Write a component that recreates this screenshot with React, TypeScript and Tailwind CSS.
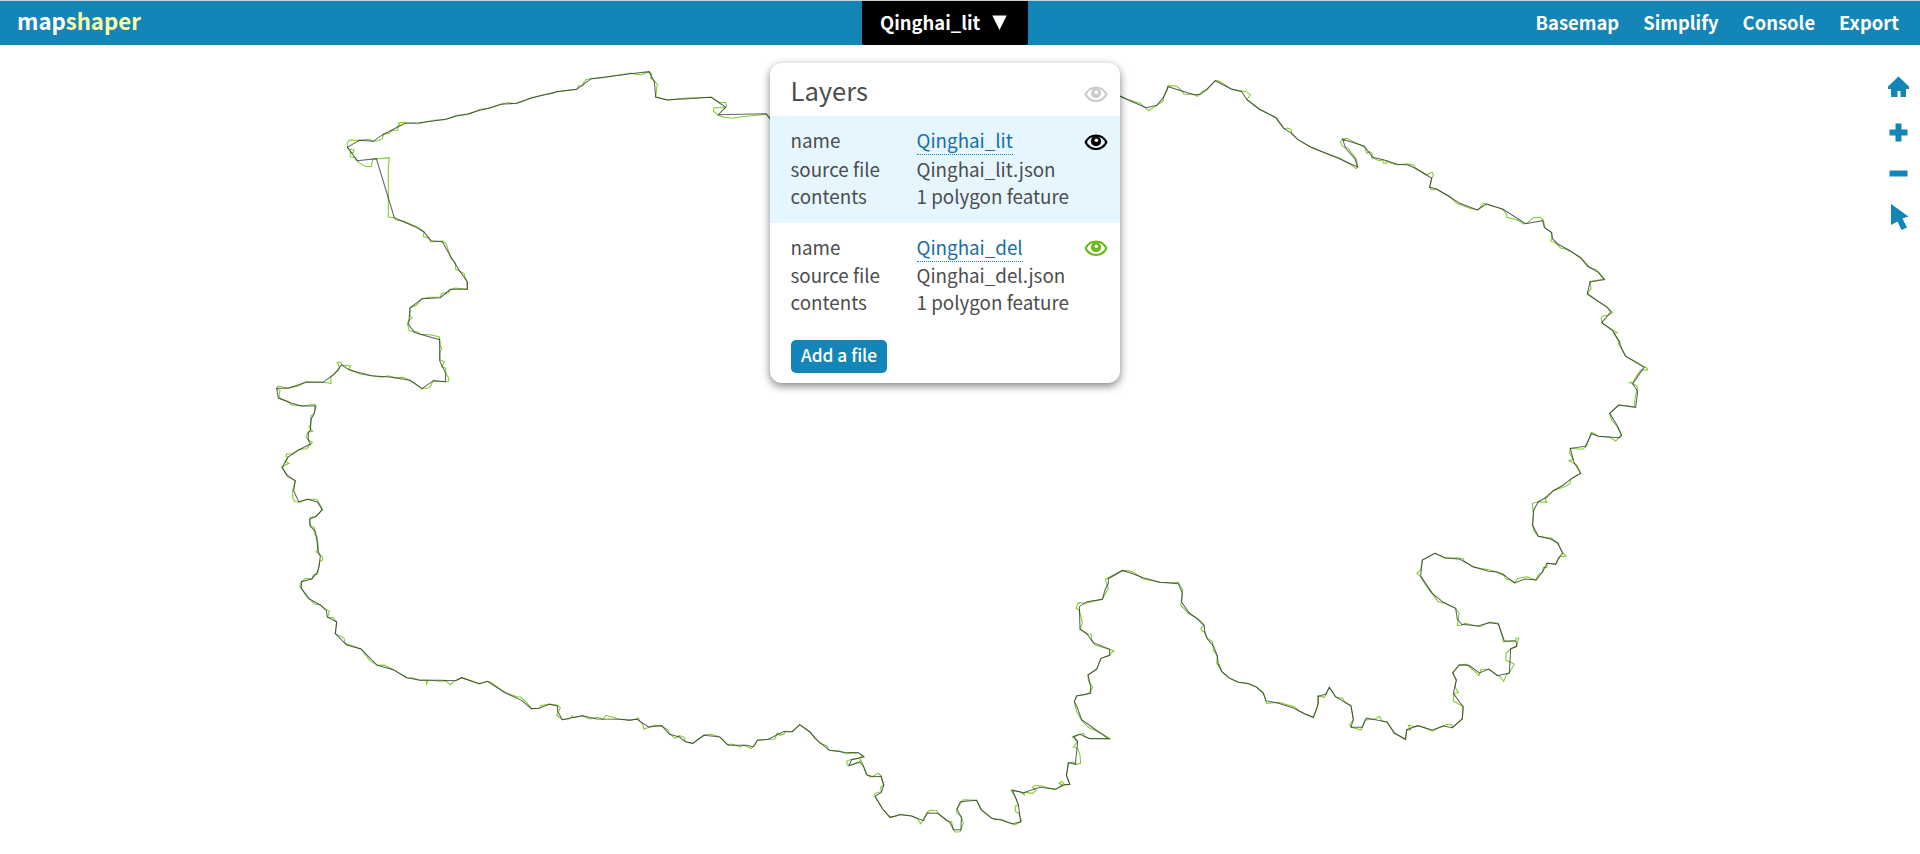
type Trace = { x: number; y: number; pts: string };

// Each trace is a run of vertices in thirds of a pixel, relative to its own origin.
const simplified: Trace[] = [
  { x: 260, y: 60, pts: "2550,95 1545,195 1518,161 1375,164 1397,142 1354,112 1222,120 1187,111 1183,66 1167,35 1112,41 1060,48 994,56 965,77 949,88 890,95 812,115 768,130 724,133 680,146 660,151 625,161 590,168 560,177 520,183 478,188 437,189 400,208 368,224 340,244 298,241 262,262 292,302 349,296 403,473 430,485 465,500 492,516 513,542 547,545 570,586 597,630 622,665 622,688 571,688 541,713 486,716 450,744 446,794 463,817 480,823 539,839 539,902 557,940 556,965 520,962 486,986 450,961 395,952 335,947 270,931 245,915 222,943 189,967 138,967 84,985 50,985" },
  { x: 260, y: 370, pts: "50,55 55,84 93,99 125,108 168,108 163,130 154,146 151,180 145,188 145,210 151,222 118,239 84,261 66,293 82,316 106,332 101,362 116,395 142,388 172,396 187,419 168,439 149,448 151,469 166,484 172,520 173,540 181,559 177,590 171,608 155,627 125,635 124,655 147,686 180,704 199,722 202,741 230,756 226,791 260,825 303,837 352,886 400,899 440,923 480,931 540,931 587,932 605,923 658,941 682,934 735,968 785,991 814,1016 838,1015 868,1003 892,1008 893,1024 907,1049 935,1043 968,1037 1010,1047 1080,1048 1110,1051" },
  { x: 640, y: 650, pts: "-30,210 -8,208 0,214 26,231 65,227 88,252 118,261 136,275 158,280 192,256 240,261 265,286 320,286 340,290 352,271 385,268 430,245 457,245 479,224 510,246 525,265 568,301 612,307 655,308 672,321 635,329 627,347 660,336 671,350 681,375 700,380 723,379 731,406 724,427 705,439 728,477 750,502 780,494 815,498 850,512 862,489 893,490 930,518 941,539 963,539 964,502 951,478 961,455 1010,451 1025,481 1055,505 1085,511 1118,521 1142,516 1135,463 1117,420 1150,428 1200,412 1246,418 1268,405 1289,403 1279,376 1286,338 1306,343 1313,275 1301,260 1320,253 1348,266 1405,266 1360,234 1325,209 1310,168 1303,155 1310,138 1352,130 1352,110 1344,75 1370,57 1383,25 1409,16" },
  { x: 1050, y: 540, pts: "179,346 179,328 130,308 112,283 90,267 88,200 111,185 157,178 165,150 175,130 175,116 217,92 240,98 280,113 330,127 385,131 397,160 395,187 418,219 440,235 463,258 464,278 472,297 490,317 502,348 505,375 515,394 535,413 565,427 595,431 620,442 640,460 648,482 685,490 730,504 765,522 790,532 805,490 805,469 828,462 838,442 857,470 903,498 910,538 903,562 937,562 949,534 1011,546 1033,580 1067,598 1070,569 1103,557 1147,570 1180,558 1207,563 1237,537 1239,500 1210,460 1219,420 1208,399 1228,375 1257,376 1288,399 1317,387 1342,407 1378,399 1382,326 1400,319 1398,303 1363,303 1345,252 1318,248 1283,258 1235,253 1222,238 1217,205 1180,187 1147,160 1112,108 1117,60 1155,40" },
  { x: 1390, y: 180, pts: "135,1120 165,1133 210,1138 250,1160 295,1174 320,1176 345,1187 374,1209 405,1197 438,1200 457,1177 471,1150 497,1153 506,1133 518,1120 503,1089 482,1077 445,1069 428,1036 431,990 445,965 470,952 490,932 520,915 545,895 572,880 551,845 541,805 586,799 605,761 625,769 688,773 695,766 682,737 659,700 686,675 737,682 743,634 728,611 762,562 706,528 696,507 688,487 668,452 635,428 662,397 652,382 592,341 600,306 643,299 625,277 592,258 572,234 540,212 505,193 488,177 485,158 463,142 458,122 407,131 338,87 289,72 262,90 210,70 170,45 140,27 119,22 125,-5 110,-15 80,-33 55,-45" },
  { x: 1110, y: 60, pts: "895,315 862,313 820,299 788,292 762,258 698,238 707,265 735,297 743,321 690,297 640,277 600,260 563,238 545,220 521,205 497,173 447,147 411,119 395,95 362,86 316,62 290,88 272,103 252,104 174,80 160,113 140,136 108,143 70,127 30,108 0,95" },
];

const detailed: Trace[] = [
  { x: 260, y: 60, pts: "2550,95 1545,190 1520,163 1440,171 1417,175 1393,172 1375,166 1360,153 1362,143 1395,143 1400,138 1397,127 1380,128 1354,112 1270,115 1222,120 1187,111 1192,73 1180,58 1172,55 1175,42 1167,35 1145,44 1127,43 1112,39 1060,48 1030,53 980,58 970,69 968,77 955,78 952,88 890,95 880,100 850,104 812,114 790,124 768,131 745,128 724,132 690,145 660,148 640,157 622,164 590,166 555,179 520,181 475,191 437,189 425,187 415,190 420,195 413,197 413,210 395,212 388,220 370,223 367,235 355,242 340,244 325,238 298,241 268,240 262,247 262,262 268,268 282,270 280,278 271,276 271,290 285,294 292,304 315,319 334,320 338,298 388,293 385,320 385,471 403,473 408,480 430,483 475,502 492,516 490,530 506,533 513,546 547,543 558,550 563,565 572,594 587,610 587,628 612,640 616,655 621,665 622,688 585,684 571,690 565,698 545,700 541,711 510,712 486,716 470,735 450,743 450,768 456,774 447,780 442,790 448,812 475,817 480,823 515,825 538,831 541,860 545,864 540,880 540,900 553,905 545,920 558,925 557,940 567,955 565,964 556,965 520,962 508,983 486,986 465,970 430,952 405,953 385,947 365,952 300,942 267,927 272,918 245,915 243,907 232,907 238,920 237,930 212,950 213,970 189,967 138,965 115,978 84,985 55,978 50,985" },
  { x: 260, y: 370, pts: "50,55 60,62 57,75 60,85 85,95 93,104 125,108 165,103 163,130 153,137 151,165 147,170 158,184 145,186 138,200 145,210 157,217 140,236 118,238 95,252 80,252 78,260 84,261 75,275 87,280 66,290 82,320 106,332 98,362 98,385 105,395 120,397 142,388 170,388 178,400 187,419 168,440 150,442 149,465 163,473 162,490 171,500 176,540 168,545 188,560 188,570 179,575 173,612 160,615 155,628 137,625 124,635 119,650 124,655 140,680 165,702 180,704 198,718 208,724 203,742 220,743 230,756 226,791 252,804 255,820 303,837 330,872 352,886 372,885 400,899 440,923 460,924 480,931 498,930 500,941 504,930 540,934 555,932 572,944 580,934 605,923 658,942 682,934 692,937 735,967 770,980 782,981 800,997 814,1016 838,1014 842,1007 868,1002 893,1006 901,1014 890,1035 907,1049 930,1046 938,1037 940,1043 968,1037 990,1047 1012,1042 1030,1048 1038,1036 1075,1047 1115,1051" },
  { x: 640, y: 650, pts: "-25,211 -5,204 0,214 8,222 12,238 26,232 45,226 65,228 85,240 88,252 106,265 118,257 133,262 136,275 158,280 192,255 212,253 238,260 262,284 275,282 300,291 310,285 333,295 345,285 352,271 385,268 405,267 412,248 420,256 432,252 435,243 457,245 479,224 510,246 540,280 560,287 568,301 600,303 617,311 655,308 670,318 655,325 635,328 620,333 622,345 635,344 658,335 662,328 668,342 678,372 690,381 700,378 715,370 723,377 732,405 722,412 724,425 705,430 705,439 728,477 750,502 768,499 780,492 815,498 832,506 842,521 862,486 870,481 890,482 895,490 920,512 935,516 940,540 946,546 960,545 970,520 964,500 951,490 949,478 970,449 1010,451 1020,475 1060,508 1085,508 1100,516 1125,525 1145,512 1135,488 1126,485 1126,468 1135,466 1128,445 1113,422 1140,425 1153,435 1152,427 1178,430 1188,421 1177,412 1185,407 1203,407 1230,415 1246,418 1270,407 1257,400 1265,394 1275,405 1290,403 1280,376 1284,338 1300,336 1308,343 1322,340 1320,315 1313,295 1300,291 1313,275 1297,260 1310,256 1330,250 1335,260 1348,265 1412,267 1380,248 1345,232 1325,212 1310,185 1303,155 1310,137 1335,134 1348,128 1358,112 1345,92 1344,75 1370,59 1383,25 1409,16" },
  { x: 1050, y: 540, pts: "179,346 182,340 192,333 178,328 135,315 125,300 124,283 112,281 90,267 97,248 88,210 78,205 85,188 105,190 157,178 175,145 166,118 217,91 237,92 250,97 280,117 330,127 365,128 385,127 398,150 392,195 415,220 445,237 463,255 453,265 457,274 465,276 472,295 487,305 490,330 502,348 500,372 508,373 515,394 545,418 565,427 595,430 620,441 640,458 650,490 685,487 735,501 745,512 790,533 803,500 803,467 823,472 838,442 857,472 878,475 885,487 903,496 910,540 898,555 905,562 933,570 945,540 975,537 989,529 995,543 1011,546 1033,578 1065,598 1070,570 1082,570 1075,555 1095,560 1110,558 1147,573 1190,553 1205,555 1207,563 1237,535 1241,500 1210,483 1212,460 1225,458 1215,440 1219,420 1208,397 1228,374 1250,373 1287,407 1293,388 1315,388 1350,410 1361,424 1369,405 1378,398 1393,373 1367,360 1369,340 1380,328 1400,319 1406,295 1399,295 1396,302 1360,306 1357,290 1345,250 1318,246 1290,260 1245,250 1233,256 1222,257 1227,220 1217,205 1185,190 1165,185 1130,140 1112,110 1101,100 1112,90 1117,60 1155,39" },
  { x: 1390, y: 180, pts: "135,1119 165,1135 205,1133 220,1136 222,1143 250,1162 297,1169 320,1176 340,1182 348,1197 360,1200 374,1209 382,1196 410,1190 438,1200 445,1184 457,1177 460,1162 471,1163 471,1150 497,1152 510,1130 528,1128 518,1118 503,1089 485,1075 445,1069 433,1055 427,1036 430,1000 427,970 445,965 470,967 465,952 490,932 528,918 540,910 543,897 572,880 560,855 537,842 550,838 539,820 541,805 578,808 590,798 603,758 612,760 625,769 660,772 677,783 690,770 694,764 680,738 665,720 659,700 686,675 733,680 735,655 743,620 730,612 719,608 730,605 738,590 752,570 773,570 770,564 758,558 738,545 708,530 685,490 690,485 672,460 682,458 668,450 638,430 633,415 637,409 655,405 668,398 652,382 620,362 592,343 603,325 600,304 643,297 620,270 600,263 572,232 530,208 512,204 495,187 483,185 485,158 465,143 460,120 450,112 430,113 413,128 400,132 385,121 350,112 350,103 338,88 289,72 280,70 265,90 240,85 200,70 180,50 140,28 125,30 119,22 125,-5 130,-13 128,-22 120,-22 110,-15 80,-33 70,-45 50,-49" },
  { x: 1110, y: 60, pts: "890,311 862,315 845,310 830,302 828,310 820,309 818,299 808,302 785,293 787,280 778,275 770,280 765,262 710,235 698,236 691,246 698,260 715,265 735,292 740,300 743,321 738,326 725,316 690,295 640,277 600,260 563,238 545,222 543,208 533,204 523,207 515,195 500,173 447,147 411,119 421,104 408,95 365,88 350,78 325,62 316,62 290,90 275,95 263,109 250,103 222,103 215,92 200,79 174,77 172,90 160,113 160,123 116,152 90,130 50,118 0,95" },
];

function toPoints(traces: Trace[]) {
  return traces
    .flatMap((t) =>
      t.pts.split(" ").map((p) => {
        const [a, b] = p.split(",").map(Number);
        return `${(t.x + a / 3).toFixed(2)},${(t.y + b / 3).toFixed(2)}`;
      }),
    )
    .join(" ");
}

function Eye({ className }: { className: string }) {
  return (
    <svg width="24" height="17" viewBox="0 0 24 17" className={className}>
      <path d="M1.6 8.3C6 -0.8 18 -0.8 22.4 8.3C18 17.3 6 17.3 1.6 8.3Z" fill="none" stroke="currentColor" strokeWidth="2.1" />
      <circle cx="12" cy="7.2" r="5.1" fill="currentColor" />
      <circle cx="12.3" cy="6.3" r="1.8" className="fill-white" />
    </svg>
  );
}

function Layer({ name, active }: { name: string; active?: boolean }) {
  return (
    <div className={active ? "flex h-[107px] bg-[#e5f6ff] pl-[20.5px] pt-2.5" : "flex h-[107px] pl-[20.5px] pt-2.5"}>
      <div className="w-[126px] shrink-0 leading-[27px]">
        <div className={active ? "h-[29px]" : "h-[28px]"}>name</div>
        <div className="h-[27px]">source file</div>
        <div className="h-[27px]">contents</div>
      </div>
      <div className="w-[167.5px] shrink-0 whitespace-nowrap leading-[27px]">
        <div className={active ? "flex h-[29px] items-start" : "flex h-[28px] items-start"}>
          <span className="h-[29px] border-b border-dotted border-[#1385b7] text-[#176fa5]">{name}</span>
        </div>
        <div className="h-[27px]">{name}.json</div>
        <div className="h-[27px]">1 polygon feature</div>
      </div>
      <Eye className={active ? "mt-2 text-black" : "mt-[7px] text-[#6db81c]"} />
    </div>
  );
}

export default function App() {
  return (
    <div className="relative flex h-[854px] w-full flex-col overflow-hidden bg-white font-['Noto_Sans_CJK_SC','Noto_Sans',sans-serif] text-[18.8px] text-[#4d4d4d]">
      <header className="grid h-[45px] shrink-0 grid-cols-[862px_166px_1fr] border-t border-[#c9d3d6] bg-[#1385b7] text-[18.4px] font-bold leading-[42px] text-white">
        <div className="pl-[17px] text-[22.2px] leading-[38px]">
          map<span className="text-[#ffffa8]">shaper</span>
        </div>
        <div className="flex rounded-b-[2px] bg-black pl-[18px]">
          <span className="w-[100px]">Qinghai_lit</span>
          <svg width="15" height="15" viewBox="0 0 15 15" className="ml-3 mt-[14px]">
            <path d="M0.3 0.5H14.7L7.5 15Z" fill="white" />
          </svg>
        </div>
        <nav className="flex justify-end gap-6 pr-[21px]">
          <span>Basemap</span>
          <span>Simplify</span>
          <span>Console</span>
          <span>Export</span>
        </nav>
      </header>

      <svg width="1920" height="854" viewBox="0 0 1920 854" className="absolute left-0 top-0" fill="none">
        <polyline points={toPoints(detailed)} stroke="#7ccc22" strokeWidth="1.05" />
        <polyline points={toPoints(simplified)} stroke="#2c2838" strokeOpacity="0.75" strokeWidth="1.05" />
      </svg>

      <svg width="24" height="160" viewBox="0 0 24 160" className="absolute left-[1886px] top-[74px] fill-[#1385b7]">
        <path d="M12.5 2.5L23 12.5V15H20V23H14.5V17H11.5V23H5V15H2V12.5Z" />
        <path d="M9.5 49.5H15.5V55.5H21.5V61.5H15.5V67.5H9.5V61.5H3.5V55.5H9.5Z" />
        <path d="M3.5 96.5H21.5V102.5H3.5Z" />
        <path d="M5 130L22.5 142.5L16.5 144.5L21 153.5L15.5 156L11.5 147.5L5 151Z" />
      </svg>

      <section className="absolute left-[770px] top-[63px] h-[320px] w-[350px] overflow-hidden rounded-[12px] bg-white shadow-[0_3px_9px_rgba(0,0,0,0.5)]">
        <div className="flex h-[53px] justify-between pl-[20.5px] pr-3">
          <h2 className="text-[25.6px] leading-[53px]">Layers</h2>
          <Eye className="mt-[23px] text-[#cccccc]" />
        </div>
        <Layer name="Qinghai_lit" active />
        <Layer name="Qinghai_del" />
        <div className="pl-[21px] pt-[10px]">
          <button className="flex h-[33px] w-[96px] items-start justify-center rounded-[5px] bg-[#1385b7] text-[17.3px] font-medium leading-[29px] text-white">
            Add a file
          </button>
        </div>
      </section>
    </div>
  );
}
